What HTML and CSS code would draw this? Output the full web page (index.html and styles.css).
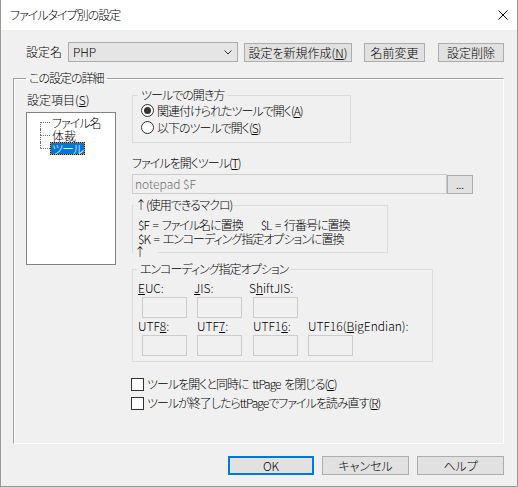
FILE: index.html
```html
<!DOCTYPE html>
<html lang="ja">
<head>
<meta charset="utf-8">
<title>ファイルタイプ別の設定</title>
<link rel="stylesheet" href="styles.css">
</head>
<body>
<div class="window">
  <div class="titlebar">
    <span class="title">ファイルタイプ別の設定</span>
    <svg class="close" width="10" height="10" viewBox="0 0 10 10"><path d="M0.5 0.5 L9.5 9.5 M9.5 0.5 L0.5 9.5" stroke="#000" stroke-width="1" fill="none"/></svg>
  </div>

  <div class="toprow">
    <span class="name-lbl kj">設定名</span>
    <div class="combo kj">
      <span>PHP</span>
      <svg width="8" height="5" viewBox="0 0 8 5"><polyline points="0.5,0.5 4,4 7.5,0.5" fill="none" stroke="#333" stroke-width="1"/></svg>
    </div>
    <button class="btn b-new kj">設定を新規作成(<u>N</u>)</button>
    <button class="btn b-rename kj">名前変更</button>
    <button class="btn b-del kj">設定削除</button>
  </div>

  <fieldset class="group main">
    <legend>この設定の詳細</legend>
    <div class="main-inner">
      <div class="leftcol">
        <div class="tree-lbl kj">設定項目(<u>S</u>)</div>
        <div class="tree">
          <div class="item first"><span class="conn"><span class="up"></span><span class="down"></span></span><span class="node">ファイル名</span></div>
          <div class="item"><span class="conn"><span class="up"></span><span class="down"></span></span><span class="node kj">体裁</span></div>
          <div class="item last"><span class="conn"><span class="up"></span><span class="down"></span></span><span class="node sel">ツール</span></div>
        </div>
      </div>

      <div class="rightcol">
        <fieldset class="sub openwith">
          <legend>ツールでの開き方</legend>
          <div class="radio-row"><span class="radio on"></span><span>関連付けられたツールで開く(<u>A</u>)</span></div>
          <div class="radio-row"><span class="radio"></span><span>以下のツールで開く(<u>S</u>)</span></div>
        </fieldset>

        <div class="tool-lbl">ファイルを開くツール(<u>T</u>)</div>
        <div class="tool-row">
          <div class="field tool-input kj">notepad $F</div>
          <button class="btn browse kj">...</button>
        </div>

        <fieldset class="sub macro">
          <legend>↑(使用できるマクロ)</legend>
          <div class="macro-line">$F = ファイル名に置換<span class="sp">$L = 行番号に置換</span></div>
          <div class="macro-line">$K = エンコーディング指定オプションに置換</div>
          <span class="arrow-lbl">↑</span>
        </fieldset>

        <fieldset class="sub enc">
          <legend>エンコーディング指定オプション</legend>
          <div class="enc-row">
            <div class="cell c1"><span class="elbl l4"><u>E</u>UC:</span><div class="field small"></div></div>
            <div class="cell c2"><span class="elbl l3"><u>J</u>IS:</span><div class="field small"></div></div>
            <div class="cell c3"><span class="elbl l4">S<u>h</u>iftJIS:</span><div class="field small"></div></div>
          </div>
          <div class="enc-row r2">
            <div class="cell c1"><span class="elbl l4">UTF<u>8</u>:</span><div class="field small"></div></div>
            <div class="cell c2"><span class="elbl">UTF<u>7</u>:</span><div class="field small"></div></div>
            <div class="cell c3"><span class="elbl">UTF1<u>6</u>:</span><div class="field small"></div></div>
            <div class="cell c4"><span class="elbl">UTF16(<u>B</u>igEndian):</span><div class="field small"></div></div>
          </div>
        </fieldset>

        <div class="check-row first-check"><span class="check"></span><span>ツールを開くと同時に ttPage を閉じる(<u>C</u>)</span></div>
        <div class="check-row"><span class="check"></span><span>ツールが終了したらttPageでファイルを読み直す(<u>R</u>)</span></div>
      </div>
    </div>
  </fieldset>

  <div class="bottom">
    <button class="btn dlg ok kj">OK</button>
    <button class="btn dlg">キャンセル</button>
    <button class="btn dlg">ヘルプ</button>
  </div>
</div>
</body>
</html>
```

FILE: styles.css
```css
* { box-sizing: border-box; }

body {
  margin: 0;
  background: #fff;
  font-family: "Noto Sans CJK JP", "Noto Sans", sans-serif;
  font-weight: 300;
  font-size: 12px;
  line-height: 14px;
  letter-spacing: -1px;
  word-spacing: 2px;
  color: #000;
  font-feature-settings: "palt";
}

.kj { letter-spacing: 0; word-spacing: 0; }

u { text-decoration: underline; text-underline-offset: 1px; }

.window {
  width: 518px;
  height: 487px;
  border: 1px solid #999;
  border-top: none;
  background: #f0f0f0;
  display: flex;
  flex-direction: column;
}

.titlebar {
  height: 30px;
  flex: none;
  background: #fff;
  display: flex;
  align-items: center;
  padding: 0 9px 0 9px;
}
.title { flex: 1; }
.close { display: block; }

/* top row */
.toprow {
  display: flex;
  align-items: flex-start;
  margin-top: 12px;
  padding-left: 25px;
  height: 21px;
}
.name-lbl { width: 42px; line-height: 20px; }
.combo {
  width: 170px;
  height: 20px;
  border: 1px solid #adadad;
  background: #e5e5e5;
  display: flex;
  align-items: center;
  justify-content: space-between;
  padding: 0 5px 0 4px;
}
.combo svg { display: block; }

.btn {
  font: inherit;
  font-feature-settings: "palt";
  color: #000;
  background: #e1e1e1;
  border: 1px solid #adadad;
  padding: 0;
  margin: 0;
  height: 19px;
  line-height: 16px;
  text-align: center;
}
.toprow .btn { margin-top: 1px; }
.b-new { width: 108px; margin-left: 6px; }
.b-rename { width: 61px; margin-left: 12px; }
.b-del { width: 66px; margin-left: 13px; }

/* group boxes */
.group {
  margin: 0;
  padding: 0;
  min-width: 0;
  border: 1px solid #dcdcdc;
}
.group legend, .sub legend {
  padding: 0 3px;
  line-height: 14px;
}
.main {
  margin: 8px 12px 0 12px;
  width: 491px;
  border-color: #a0a0a0 #fff #fff #a0a0a0;
  box-shadow: inset 1px 1px 0 #fff;
}
.main > legend { margin-left: 12px; }

.main-inner {
  display: flex;
  padding: 3px 0 32px 12px;
}

.leftcol { width: 90px; margin-right: 16px; padding-top: 5px; flex: none; }
.tree-lbl { padding-left: 1px; height: 14px; }
.tree {
  margin-top: 5px;
  height: 153px;
  background: #fff;
  border: 1px solid #828282;
  padding: 3px 0 0 13px;
}
.item { display: flex; height: 13px; }
.conn { width: 10px; display: flex; flex-direction: column; flex: none; }
.conn .up { height: 6px; border-left: 1px dotted #6f6f6f; }
.conn .down { flex: 1; border-left: 1px dotted #6f6f6f; border-top: 1px dotted #6f6f6f; }
.item.first .up { border-left-color: transparent; }
.item.last .down { border-left-color: transparent; }
.node {
  border: 1px solid transparent;
  padding: 0 1px;
  line-height: 11px;
  white-space: nowrap;
}
.node.sel {
  color: #fff;
  border: 1px dotted #2b1a00;
  background: linear-gradient(#0078d7, #0078d7) padding-box, linear-gradient(#f7941d, #f7941d) border-box;
}

.rightcol { display: flex; flex-direction: column; align-items: flex-start; }

.sub { border: 1px solid #dcdcdc; margin: 0; padding: 0; min-width: 0; }

.openwith { width: 219px; padding-bottom: 6px; }
.openwith > legend { margin-left: 5px; }
.radio-row { display: flex; align-items: center; height: 17px; padding-left: 8px; }
.radio {
  width: 13px;
  height: 13px;
  border: 1px solid #333;
  border-radius: 50%;
  background: #fff;
  margin-right: 3px;
  display: flex;
  align-items: center;
  justify-content: center;
  flex: none;
}
.radio.on::after {
  content: "";
  width: 7px;
  height: 7px;
  border-radius: 50%;
  background: #333;
}

.tool-lbl { margin-top: 13px; }
.tool-row { display: flex; margin-top: 4px; align-items: flex-start; }
.field {
  border: 1px solid #cccccc;
  background: #f0f0f0;
  color: #6d6d6d;
}
.tool-input { width: 315px; height: 20px; line-height: 18px; padding-left: 2px; }
.browse { width: 26px; height: 19px; margin-top: 1px; line-height: 15px; font-size: 11px; }

.macro { width: 256px; margin-top: 4px; padding: 6px 0 6px 5px; position: relative; }
.macro > legend { margin-left: -4px; padding: 0 1px; }
.macro-line { white-space: nowrap; height: 14px; }
.sp { margin-left: 18px; }
.arrow-lbl {
  position: absolute;
  left: 0;
  bottom: -7px;
  width: 25px;
  padding-left: 1px;
  background: #f0f0f0;
  line-height: 14px;
}

.enc { width: 301px; margin-top: 9px; padding: 5px 0 5px 9px; }
.enc > legend { margin-left: -5px; }
.enc-row { display: flex; }
.enc-row.r2 { margin-top: 1px; }
.cell { display: flex; flex-direction: column; align-items: flex-start; }
.c1 { width: 55px; }
.c2 { width: 56px; }
.c3 { width: 55px; }
.elbl { height: 14px; margin-bottom: 2px; white-space: nowrap; letter-spacing: 0; }
.elbl.l4 { margin-left: -4px; }
.elbl.l3 { margin-left: -3px; }
.field.small { width: 45px; height: 21px; }

.check-row { display: flex; align-items: center; height: 16px; margin-left: -1px; margin-top: 3px; white-space: nowrap; }
.check-row.first-check { margin-top: 14px; }
.check {
  width: 13px;
  height: 13px;
  border: 1px solid #333;
  background: #fff;
  margin-right: 3px;
  flex: none;
}

.bottom {
  display: flex;
  justify-content: flex-end;
  gap: 8px;
  margin: 12px 13px 0 0;
}
.dlg { width: 87px; }
.dlg.ok { width: 86px; border: 2px solid #0078d7; line-height: 15px; }
```
